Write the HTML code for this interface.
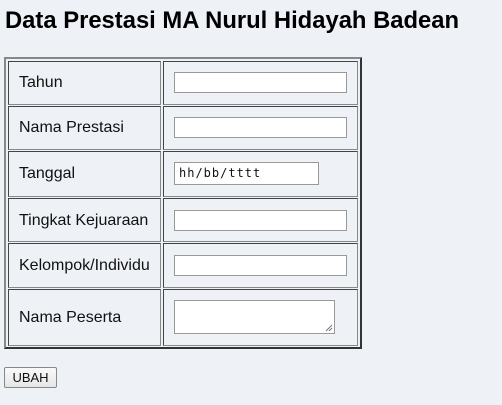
<!DOCTYPE html>
<html><head><meta charset="utf-8"><style>
html,body{margin:0;padding:0;background:#eef1f6;width:502px;height:405px;overflow:hidden;font-family:"Liberation Sans",Arial,sans-serif;}
h1{position:absolute;left:5px;top:7px;margin:0;font-size:23.8px;font-weight:bold;color:#000;white-space:nowrap;}
.outer{position:absolute;left:4px;top:57px;width:354px;height:288px;border:2px solid;border-color:#888 #333 #333 #888;}
.c{position:absolute;border:1px solid;border-color:#444 #888 #888 #444;box-sizing:border-box;}
.l{left:8px;width:153px;}
.r{left:163px;width:195px;}
.t{position:absolute;left:19px;font-size:16px;color:#111;}
.in{position:absolute;left:174px;width:173px;height:21px;background:#fff;border:1px solid #999;box-sizing:border-box;}
.btn{position:absolute;left:4px;top:367px;width:53px;height:21px;box-sizing:border-box;border:1px solid #888;background:linear-gradient(#fafafa,#e6e6e6);font-size:13px;text-align:center;line-height:19px;color:#111;border-radius:2px}
</style></head><body>
<h1>Data Prestasi MA Nurul Hidayah Badean</h1>
<div class="outer"></div>

<div class="c l" style="top:61px;height:44px"></div><div class="c r" style="top:61px;height:44px"></div>
<div class="c l" style="top:106px;height:44px"></div><div class="c r" style="top:106px;height:44px"></div>
<div class="c l" style="top:151px;height:46px"></div><div class="c r" style="top:151px;height:46px"></div>
<div class="c l" style="top:198px;height:44px"></div><div class="c r" style="top:198px;height:44px"></div>
<div class="c l" style="top:243px;height:45px"></div><div class="c r" style="top:243px;height:45px"></div>
<div class="c l" style="top:289px;height:57px"></div><div class="c r" style="top:289px;height:57px"></div>

<div class="t" style="top:74px">Tahun</div>
<div class="t" style="top:119px">Nama Prestasi</div>
<div class="t" style="top:165px">Tanggal</div>
<div class="t" style="top:212px">Tingkat Kejuaraan</div>
<div class="t" style="top:257px">Kelompok/Individu</div>
<div class="t" style="top:309px">Nama Peserta</div>

<div class="in" style="top:72px"></div>
<div class="in" style="top:117px"></div>
<div class="in" style="top:162px;width:145px;height:23px;font-family:'DejaVu Sans Mono','Liberation Mono',monospace;font-size:12px;line-height:21px;padding-left:4px;letter-spacing:1px;color:#111">hh/bb/tttt</div>
<div class="in" style="top:210px"></div>
<div class="in" style="top:255px"></div>
<div class="in" style="top:300px;width:161px;height:34px">
<svg style="position:absolute;right:1px;bottom:1px" width="9" height="9"><path d="M8 2L2 8M8 5L5 8" stroke="#777" stroke-width="1"/></svg>
</div>

<div class="btn">UBAH</div>
</body></html>
